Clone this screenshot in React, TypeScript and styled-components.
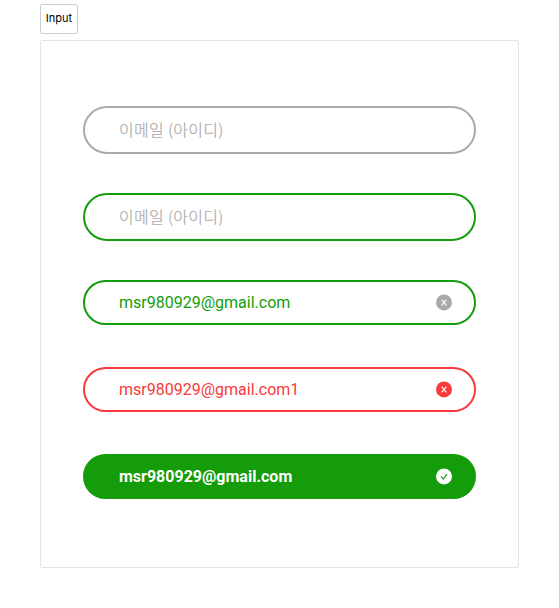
import React from "react";
import styled, { createGlobalStyle } from "styled-components";

const Global = createGlobalStyle`
  *{box-sizing:border-box}
  body{margin:0;background:#fff;}
`;
const Page = styled.main`
  width: 559px;
  height: 608px;
  padding: 4px 40px 40px;
  display: flex;
  flex-direction: column;
  align-items: flex-start;
  gap: 6px;
  font-family: Roboto, "Noto Sans CJK KR", sans-serif;
`;
const Tag = styled.div`
  width: 38px;
  height: 30px;
  padding-bottom: 1px;
  border: 1px solid #ccc;
  border-radius: 2px;
  display: flex;
  align-items: center;
  justify-content: center;
  font: 400 11px/1 Inter, sans-serif;
  color: #000;
`;
const Panel = styled.section`
  width: 479px;
  height: 528px;
  border: 1px solid #e5e5e5;
  border-radius: 2px;
  padding: 65px 42px;
  display: flex;
  flex-direction: column;
`;
type Tone = "idle" | "focus" | "filled" | "error" | "done";
const edge = { idle: "#aaaaaa", focus: "#149c0a", filled: "#149c0a", error: "#f93a3a", done: "#149c0a" };
const ink = { idle: "#aaaaaa", focus: "#aaaaaa", filled: "#149c0a", error: "#f93a3a", done: "#ffffff" };
const Field = styled.div<{ $tone: Tone; $tall?: boolean }>`
  height: ${p => (p.$tall ? 48 : 45)}px;
  margin-bottom: ${p => (p.$tall ? 39 : 42)}px;
  flex: none;
  border: 2px solid ${p => edge[p.$tone]};
  border-radius: 24px;
  background: ${p => (p.$tone === "done" ? "#149c0a" : "#fff")};
  color: ${p => ink[p.$tone]};
  padding: 0 22px 0 34px;
  display: flex;
  align-items: center;
  justify-content: space-between;
`;
const Text = styled.span<{ $bold?: boolean }>`
  font-size: 16px;
  line-height: 20px;
  font-weight: ${p => (p.$bold ? 700 : 400)};
  white-space: nowrap;
`;
const Placeholder = styled(Text)`
  padding-bottom: 2px;
  font-family: "Noto Sans CJK KR", sans-serif;
  font-weight: 300;
  font-size: 16px;
  letter-spacing: 0.3px;
  -webkit-text-stroke: 0.2px #aaaaaa;
`;
const Icon = styled.svg`
  width: 16px;
  height: 17px;
  display: block;
`;
const Cross = ({ fill }: { fill: string }) => (
  <Icon viewBox="0 0 16 17" fill="none">
    <circle cx="8" cy="8.4" r="8" fill={fill} />
    <path d="M5.6 5.6l4.8 5.8M10.4 5.6l-4.8 5.8" stroke="#fff" strokeWidth="1.2" />
  </Icon>
);
const Check = () => (
  <Icon viewBox="0 0 16 17" fill="none">
    <circle cx="8" cy="8.4" r="8" fill="#fff" />
    <path d="M5 8.4l2.3 2.7L11 5.8" stroke="#149c0a" strokeWidth="1.2" />
  </Icon>
);

export default function App() {
  return (
    <>
      <Global />
      <Page>
        <Tag>Input</Tag>
        <Panel>
          <Field $tone="idle" $tall><Placeholder>이메일 (아이디)</Placeholder></Field>
          <Field $tone="focus" $tall><Placeholder>이메일 (아이디)</Placeholder></Field>
          <Field $tone="filled"><Text>msr980929@gmail.com</Text><Cross fill="#aaaaaa" /></Field>
          <Field $tone="error"><Text>msr980929@gmail.com1</Text><Cross fill="#f93a3a" /></Field>
          <Field $tone="done"><Text $bold>msr980929@gmail.com</Text><Check /></Field>
        </Panel>
      </Page>
    </>
  );
}
